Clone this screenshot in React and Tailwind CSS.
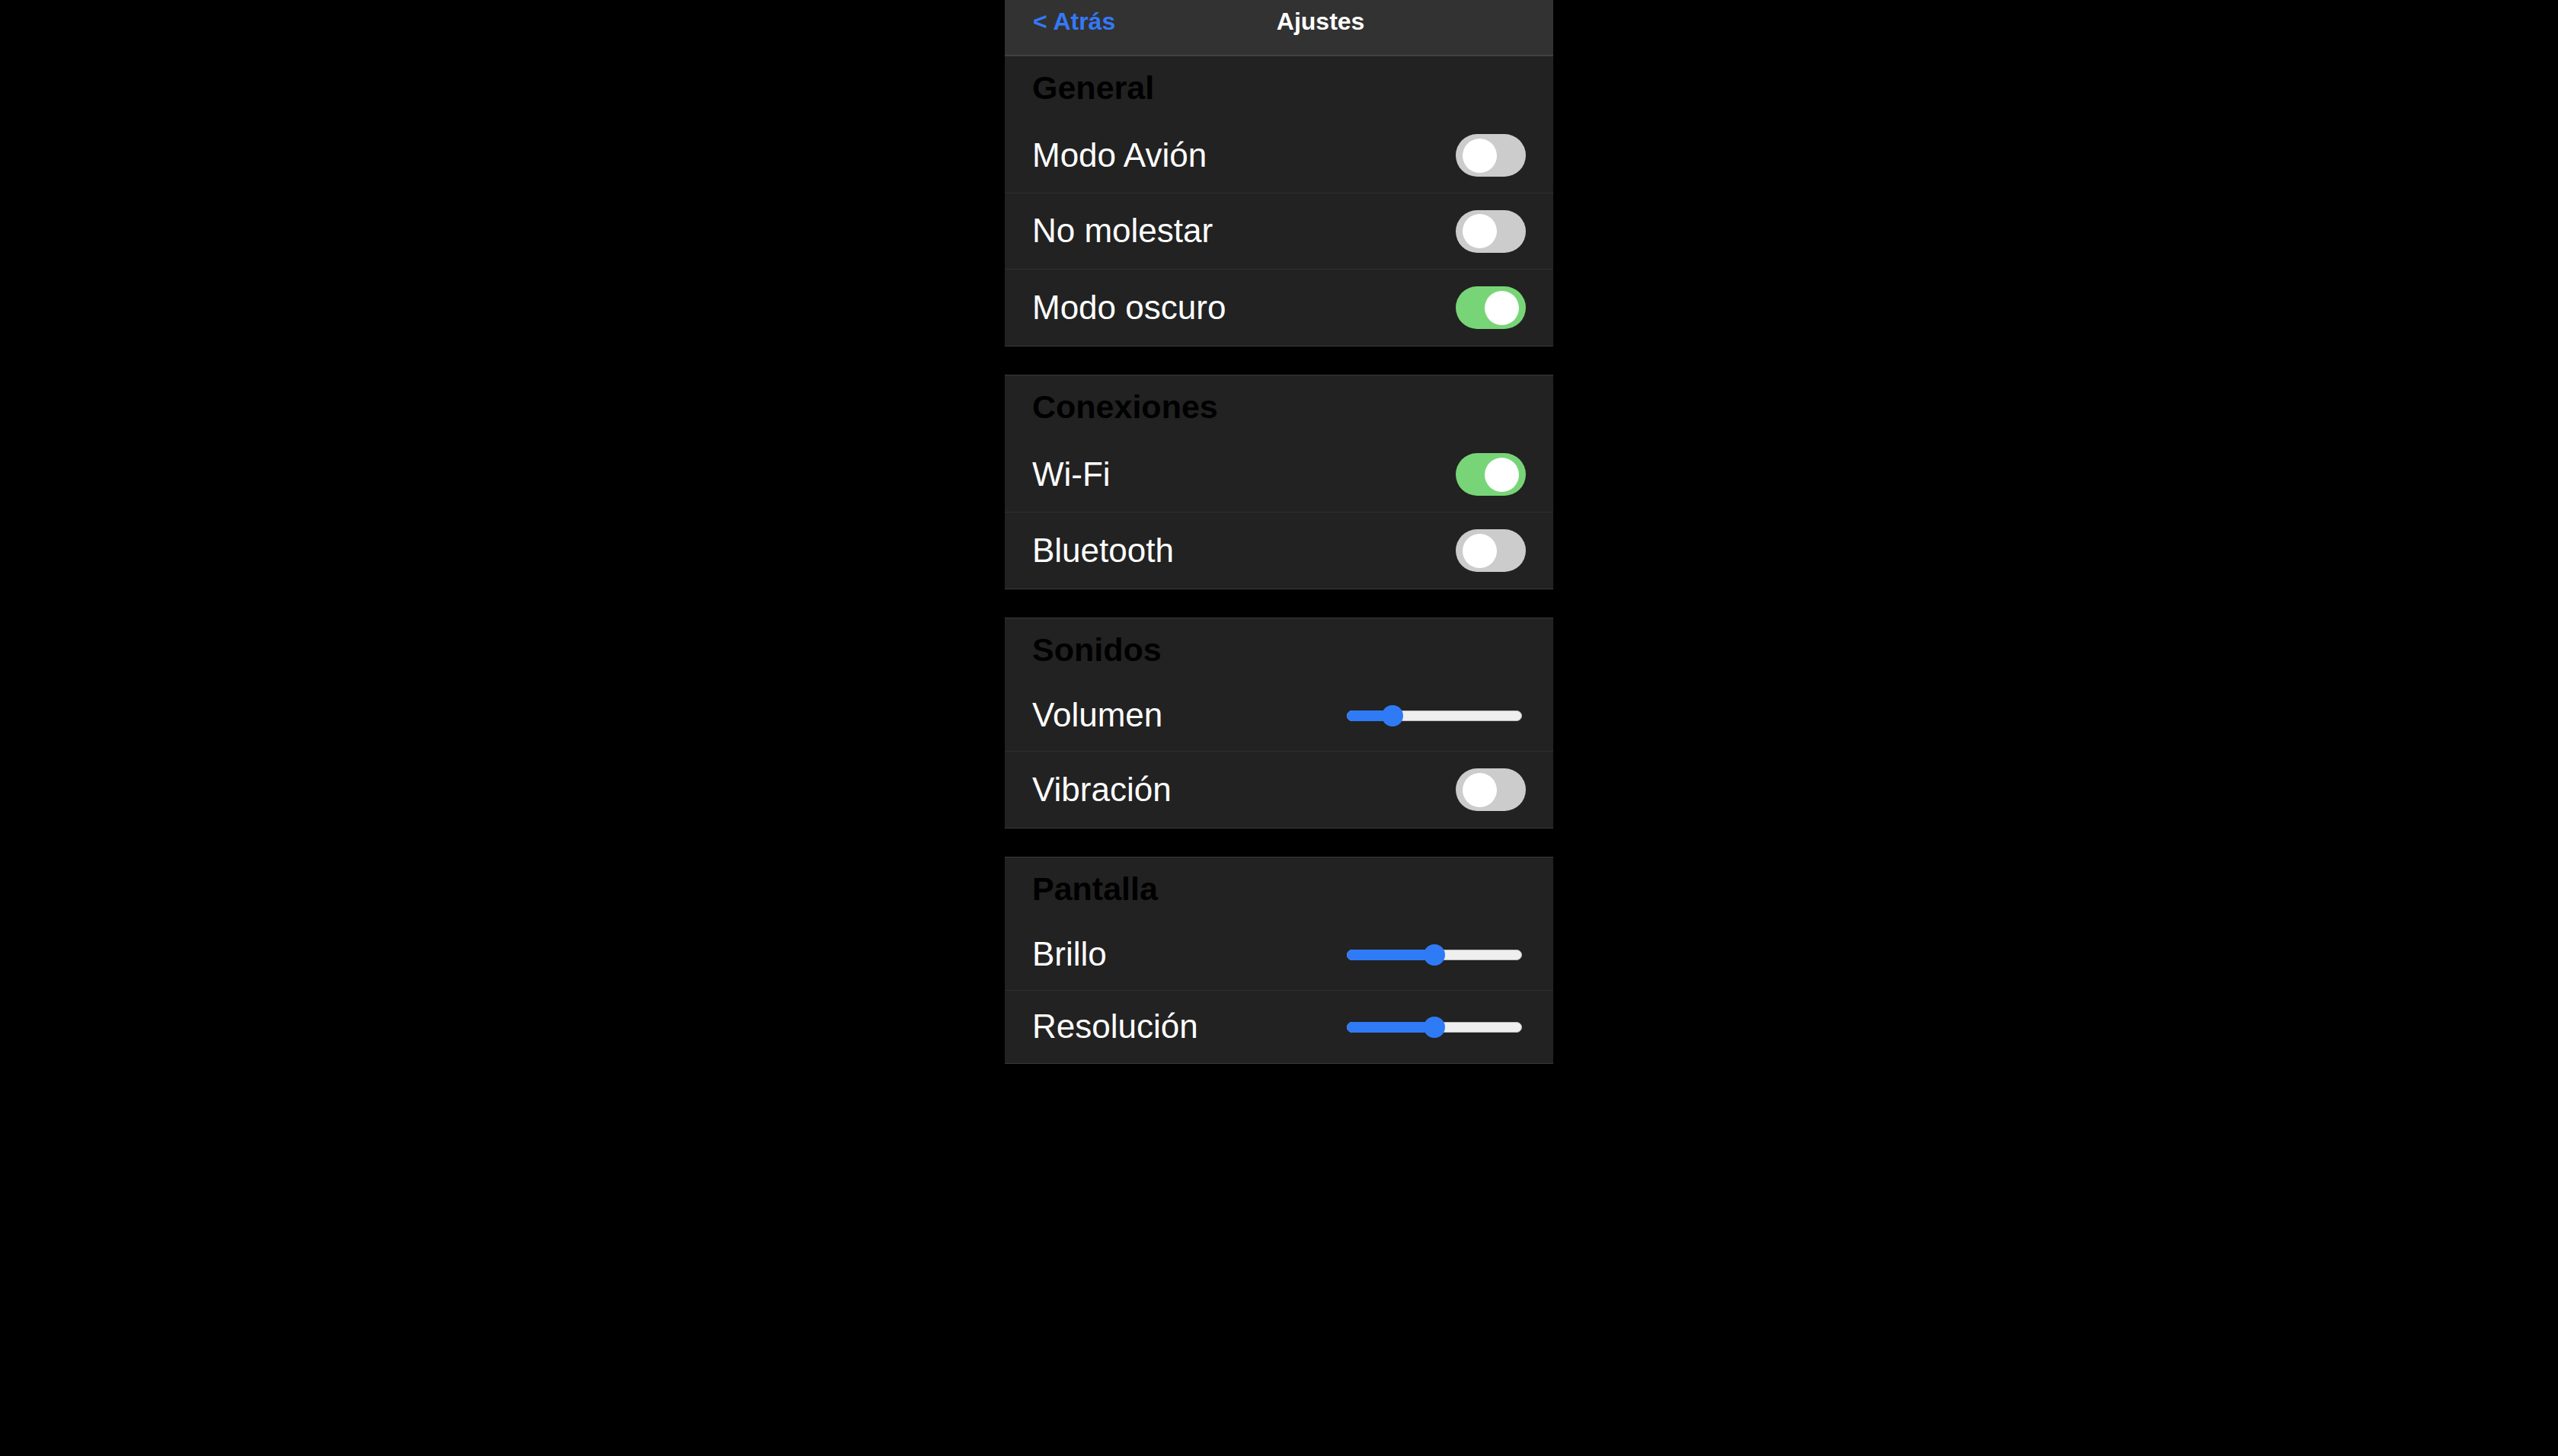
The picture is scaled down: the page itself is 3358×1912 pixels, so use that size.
import { useState } from 'react'

const sections = [
  {
    title: 'General',
    items: [
      { label: 'Modo Avión', type: 'toggle', value: false },
      { label: 'No molestar', type: 'toggle', value: false },
      { label: 'Modo oscuro', type: 'toggle', value: true },
    ],
  },
  {
    title: 'Conexiones',
    items: [
      { label: 'Wi-Fi', type: 'toggle', value: true },
      { label: 'Bluetooth', type: 'toggle', value: false },
    ],
  },
  {
    title: 'Sonidos',
    items: [
      { label: 'Volumen', type: 'slider', value: 23 },
      { label: 'Vibración', type: 'toggle', value: false },
    ],
  },
  {
    title: 'Pantalla',
    items: [
      { label: 'Brillo', type: 'slider', value: 50 },
      { label: 'Resolución', type: 'slider', value: 50 },
    ],
  },
]

const Toggle = ({ on, onClick }) => (
  <button
    onClick={onClick}
    className={`flex items-center w-[92px] h-[56px] rounded-full px-[9px] ${on ? 'bg-[#78d577] justify-end' : 'bg-[#cccccc] justify-start'}`}
  >
    <span className="block w-[45px] h-[45px] rounded-full bg-white" />
  </button>
)

const Slider = ({ value }) => {
  // thumb travels between radius and width - radius, like a native range
  const center = 14 + (value / 100) * (230 - 28)
  return (
    <div className="relative w-[230px] h-[28px] mr-[5px]">
      <div className="absolute left-0 right-0 top-[7px] h-[14px] rounded-full bg-[#efefef] border border-[#b9b9b9]" />
      <div
        className="absolute left-0 top-[7px] h-[14px] rounded-full bg-[#2f7bf6]"
        style={{ width: center }}
      />
      <div
        className="absolute top-0 w-[28px] h-[28px] rounded-full bg-[#2f7bf6]"
        style={{ left: center - 14 }}
      />
    </div>
  )
}

const rowHeight = (type, first) => {
  if (type === 'toggle') return first ? 'h-[99px]' : 'h-[100px]'
  return first ? 'h-[94px]' : 'h-[95px]'
}

const App = () => {
  const [data, setData] = useState(sections)

  const flip = (si, ii) => {
    setData(data.map((s, i) => i !== si ? s : {
      ...s,
      items: s.items.map((it, j) => j !== ii ? it : { ...it, value: !it.value }),
    }))
  }

  return (
    <div className="w-full min-h-screen bg-black flex justify-center font-[family-name:Liberation_Sans,Arial,sans-serif] leading-[1.149]">
      <div className="w-[720px] flex flex-col">
        <div className="h-[73px] bg-[#323232] border-b border-[#454545] flex items-start pt-[10px] pl-[37px] pr-[36px]">
          <span className="text-[32px] font-bold text-[#3479f6]">&lt; Atrás</span>
          <span className="flex-1 text-center text-[32px] font-bold text-white">Ajustes</span>
        </div>

        {data.map((section, si) => (
          <div
            key={section.title}
            className={`bg-[#222222] border-y border-[#3a3a3a] ${si > 0 ? 'mt-[37px]' : ''}`}
          >
            <div className="h-[81px] pt-[17px] pl-[36px]">
              <h2 className="text-[43px] font-bold text-black">{section.title}</h2>
            </div>
            <div className="divide-y divide-[#2f2f2f]">
              {section.items.map((item, ii) => (
                <div
                  key={item.label}
                  className={`flex items-center justify-between pl-[36px] pr-[36px] ${rowHeight(item.type, ii === 0)}`}
                >
                  <span className="text-[44px] text-white">{item.label}</span>
                  {item.type === 'toggle'
                    ? <Toggle on={item.value} onClick={() => flip(si, ii)} />
                    : <Slider value={item.value} />}
                </div>
              ))}
            </div>
          </div>
        ))}
      </div>
    </div>
  )
}

export default App
